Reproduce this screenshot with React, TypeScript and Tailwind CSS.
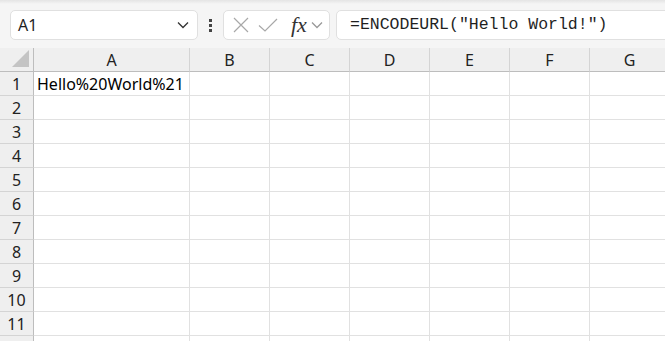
import React from "react";

const COLS = [
  { name: "A", w: "w-[156px]" },
  { name: "B", w: "w-[80px]" },
  { name: "C", w: "w-[80px]" },
  { name: "D", w: "w-[80px]" },
  { name: "E", w: "w-[80px]" },
  { name: "F", w: "w-[80px]" },
  { name: "G", w: "w-[80px]" },
];

// row 12 is only a sliver at the bottom edge, its label falls off screen
const ROWS = Array.from({ length: 12 }, (_, i) => i + 1);

const cells: Record<string, string> = { A1: "Hello%20World%21" };

function Chevron({ className }: { className?: string }) {
  return (
    <svg width="12" height="8" viewBox="0 0 12 8" className={className}>
      <path d="M1 1.5 L6 6.5 L11 1.5" fill="none" stroke="currentColor" strokeWidth="1.3" />
    </svg>
  );
}

function Toolbar() {
  return (
    <div className="relative h-[48px] bg-[#f5f5f5] flex items-start pt-[10px]">
      <div className="absolute top-0 left-0 right-0 h-[4px] bg-gradient-to-b from-[#e4e4e4] to-[#f5f5f5]" />
      {/* name box */}
      <div className="ml-[10px] w-[188px] shrink-0 h-[30px] bg-white border border-[#e0e0e0] rounded-[5px] flex items-center pl-[7px] pr-[8px]">
        <span className="flex-1 text-[16px] text-[#1f1f1f]">A1</span>
        <Chevron className="text-[#333]" />
      </div>
      {/* dots */}
      <div className="w-[25px] shrink-0 h-[30px] flex flex-col items-center justify-center gap-[2px]">
        <div className="w-[3px] h-[3px] bg-[#444]" />
        <div className="w-[3px] h-[3px] bg-[#444]" />
        <div className="w-[3px] h-[3px] bg-[#444]" />
      </div>
      {/* cancel / enter / fx */}
      <div className="w-[107px] shrink-0 h-[30px] bg-white border border-[#e0e0e0] rounded-[5px] flex items-center pl-[9px]">
        <svg width="16" height="16" viewBox="0 0 16 16">
          <path d="M1 1 L15 15 M15 1 L1 15" stroke="#a8a8a8" strokeWidth="1.2" fill="none" />
        </svg>
        <svg width="20" height="16" viewBox="0 0 20 16" className="ml-[9px]">
          <path d="M1 8.5 L7 14 L19 2" stroke="#a8a8a8" strokeWidth="1.2" fill="none" />
        </svg>
        <span
          className="ml-[13px] text-[22px] italic text-[#333] leading-none"
          style={{ fontFamily: '"Liberation Serif", serif' }}
        >
          fx
        </span>
        <Chevron className="ml-[4px] text-[#999]" />
      </div>
      {/* formula bar */}
      <div className="ml-[6px] w-[340px] shrink-0 h-[30px] bg-white border border-[#e0e0e0] rounded-[5px] flex items-center pl-[13px]">
        <span
          className="text-[16.5px] text-[#1f1f1f] whitespace-nowrap"
          style={{ fontFamily: '"Liberation Mono", monospace' }}
        >
          =ENCODEURL("Hello World!")
        </span>
      </div>
    </div>
  );
}

function Grid() {
  return (
    <div className="flex flex-col">
      <div className="flex h-[24px]">
        <div className="relative w-[34px] shrink-0 bg-[#efefef] border-r border-b border-[#bdbdbd]">
          <svg width="18" height="18" viewBox="0 0 18 18" className="absolute right-[3px] bottom-[3px]">
            <path d="M17 0 L17 17 L0 17 Z" fill="#c4c4c4" />
          </svg>
        </div>
        {COLS.map((c) => (
          <div
            key={c.name}
            className={`${c.w} shrink-0 bg-[#efefef] border-r border-r-[#d4d4d4] border-b border-b-[#bdbdbd] flex items-center justify-center text-[16px] text-[#222]`}
          >
            {c.name}
          </div>
        ))}
      </div>
      {ROWS.map((r) => (
        <div key={r} className="flex h-[24px]">
          <div className="w-[34px] shrink-0 bg-[#efefef] border-r border-r-[#bdbdbd] border-b border-b-[#d4d4d4] flex items-center justify-center text-[16px] text-[#222]">
            {r < 12 ? r : ""}
          </div>
          {COLS.map((c) => (
            <div
              key={c.name}
              className={`${c.w} shrink-0 border-r border-b border-[#e1e1e1] flex items-center pl-[3px] text-[16px] text-black whitespace-nowrap`}
            >
              {cells[`${c.name}${r}`] ?? ""}
            </div>
          ))}
        </div>
      ))}
    </div>
  );
}

export default function App() {
  return (
    <div
      className="w-[665px] h-[341px] overflow-hidden bg-white"
      style={{ fontFamily: '"Noto Sans", "Liberation Sans", sans-serif' }}
    >
      <Toolbar />
      <Grid />
    </div>
  );
}
